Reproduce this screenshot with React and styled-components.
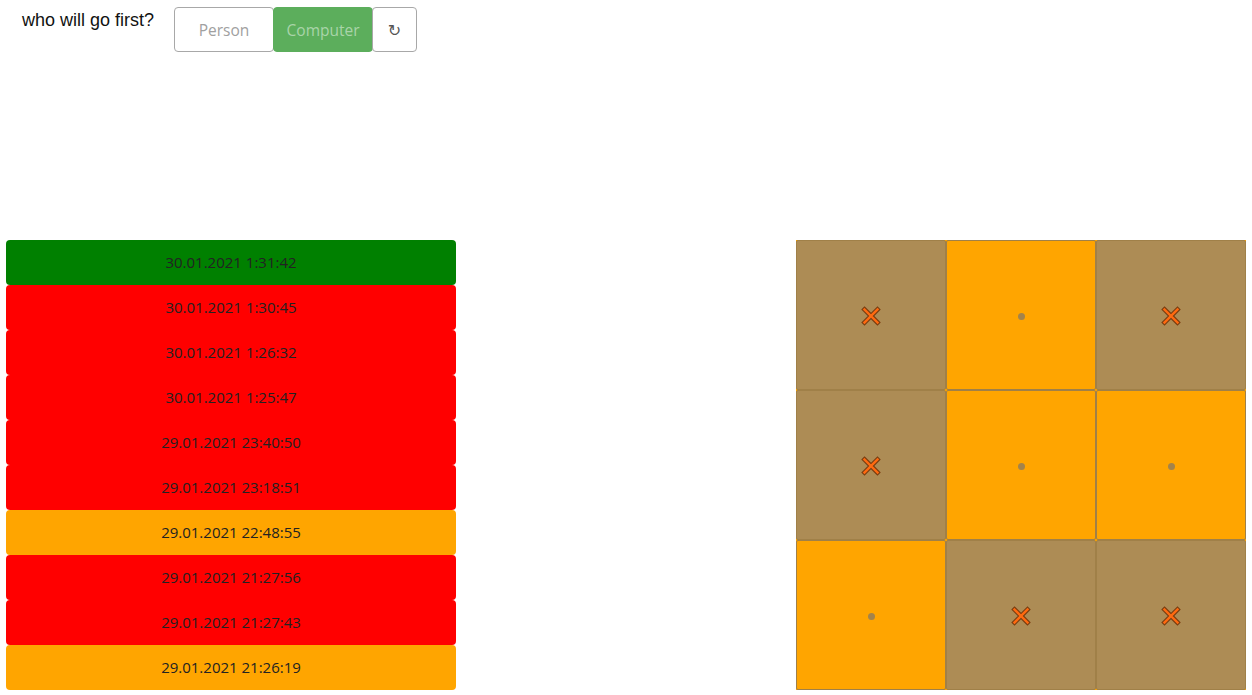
import React from "react";
import styled, { createGlobalStyle } from "styled-components";

const Global = createGlobalStyle`
  html, body { margin: 0; padding: 0; background: #fff; }
  body { font-family: "Open Sans", "Noto Sans", sans-serif; color: #212529; }
`;

const Page = styled.div`
  width: 1252px;
  box-sizing: border-box;
  padding: 0 6px;
`;

const Header = styled.div`
  display: flex;
  align-items: flex-start;
  height: 240px;
  padding-top: 7px;
  box-sizing: border-box;
`;

const Question = styled.div`
  font-family: "Liberation Sans", Arial, sans-serif;
  font-size: 18px;
  color: #111;
  margin: 3px 20px 0 16px;
`;

const Group = styled.div`
  display: flex;
`;

const Btn = styled.button`
  height: 45px;
  width: ${(p) => p.$w}px;
  margin-left: ${(p) => (p.$first ? 0 : -1)}px;
  border: 1px solid ${(p) => (p.$active ? "#5cae5c" : "#a8a8a8")};
  border-radius: 4px;
  background: ${(p) => (p.$active ? "#5cae5c" : "#fff")};
  color: ${(p) => (p.$active ? "#a9d4a9" : "#a0a0a0")};
  font-family: "Open Sans", "Noto Sans", sans-serif;
  font-size: 15.5px;
  padding: 0;
  display: flex;
  align-items: center;
  justify-content: center;
  cursor: pointer;
`;

const RefreshGlyph = styled.span`
  color: #555;
  font-family: "DejaVu Sans", sans-serif;
  font-size: 16px;
  margin-top: 1px;
`;

const Main = styled.div`
  display: flex;
  justify-content: space-between;
  align-items: flex-start;
`;

const List = styled.div`
  width: 450px;
  display: flex;
  flex-direction: column;
`;

const colors = { win: "#008000", loss: "#ff0000", draw: "#ffa500" };

const Row = styled.div`
  height: 45px;
  box-sizing: border-box;
  padding-bottom: 2px;
  background: ${(p) => colors[p.$kind]};
  border-radius: 4px;
  display: flex;
  align-items: center;
  justify-content: center;
  font-size: 15px;
  color: #222;
`;

const Board = styled.div`
  width: 450px;
  height: 450px;
  display: grid;
  grid-template-columns: repeat(3, 150px);
  grid-template-rows: repeat(3, 150px);
  background: #ffa500;
`;

const Cell = styled.div`
  box-sizing: border-box;
  background: ${(p) => (p.$filled ? "#ad8c55" : "#ffa500")};
  border: 1px solid #a08048;
  border-radius: 2px;
  display: flex;
  align-items: center;
  justify-content: center;
`;

const Dot = styled.div`
  width: 7px;
  height: 7px;
  border-radius: 50%;
  background: #a3834b;
  margin-top: 2px;
`;

const Cross = () => (
  <svg width="20" height="20" viewBox="0 0 20 20" style={{ marginTop: 1 }}>
    <g strokeLinecap="square">
      <path d="M3.5 3.5 L16.5 16.5 M16.5 3.5 L3.5 16.5" stroke="#7a3d10" strokeWidth="4.6" />
      <path d="M3.5 3.5 L16.5 16.5 M16.5 3.5 L3.5 16.5" stroke="#ff6a10" strokeWidth="2.4" />
    </g>
  </svg>
);

const games = [
  ["30.01.2021 1:31:42", "win"],
  ["30.01.2021 1:30:45", "loss"],
  ["30.01.2021 1:26:32", "loss"],
  ["30.01.2021 1:25:47", "loss"],
  ["29.01.2021 23:40:50", "loss"],
  ["29.01.2021 23:18:51", "loss"],
  ["29.01.2021 22:48:55", "draw"],
  ["29.01.2021 21:27:56", "loss"],
  ["29.01.2021 21:27:43", "loss"],
  ["29.01.2021 21:26:19", "draw"],
];

const board = ["x", "o", "x", "x", "o", "o", "o", "x", "x"];

export default function App() {
  return (
    <Page>
      <Global />
      <Header>
        <Question>who will go first?</Question>
        <Group>
          <Btn $w={100} $first>Person</Btn>
          <Btn $w={100} $active>Computer</Btn>
          <Btn $w={45}><RefreshGlyph>↻</RefreshGlyph></Btn>
        </Group>
      </Header>
      <Main>
        <List>
          {games.map(([t, k]) => (
            <Row key={t} $kind={k}>{t}</Row>
          ))}
        </List>
        <Board>
          {board.map((v, i) => (
            <Cell key={i} $filled={v === "x"}>
              {v === "x" ? <Cross /> : <Dot />}
            </Cell>
          ))}
        </Board>
      </Main>
    </Page>
  );
}
